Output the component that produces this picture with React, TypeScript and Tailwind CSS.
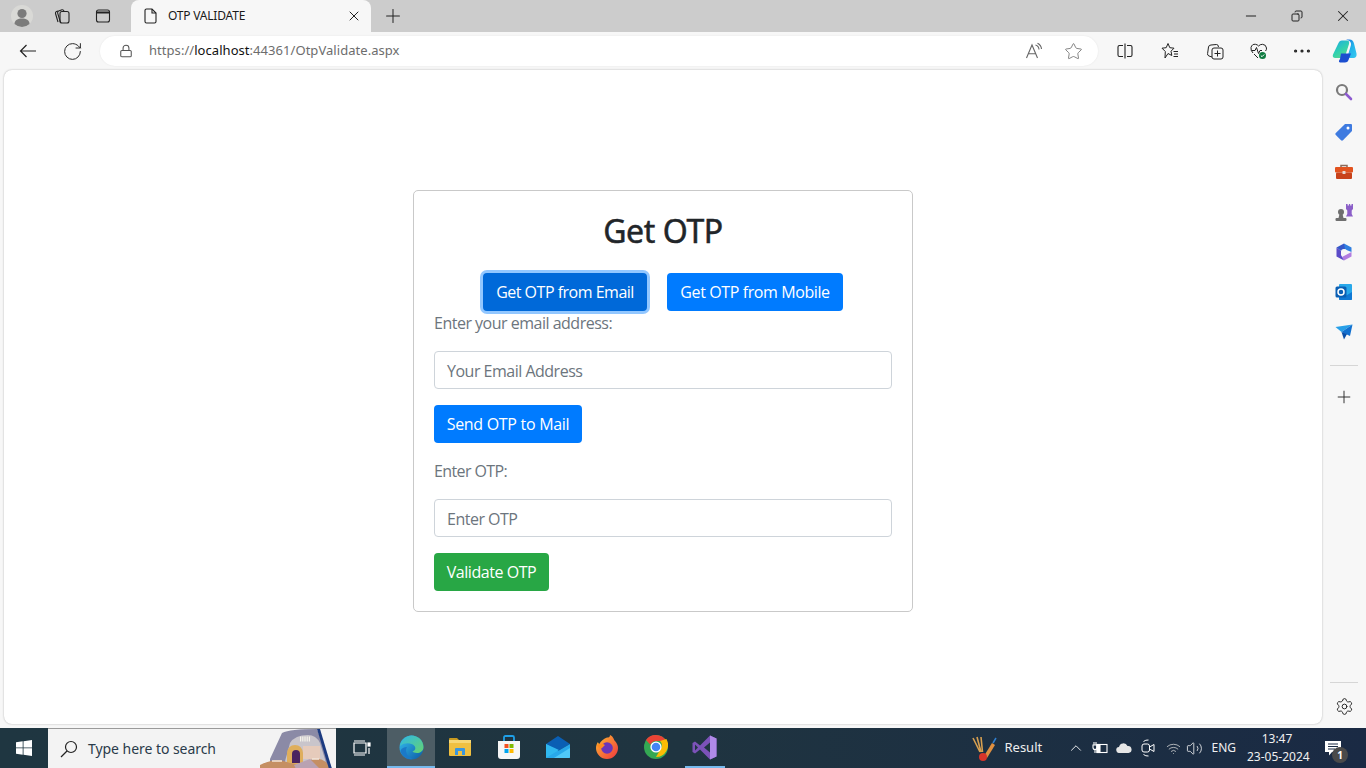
import { Copy, Lock, X, Plus, RotateCw, Minus, Star, Ellipsis, Settings, Wifi, Volume2, ChevronUp } from "lucide-react";

const font = { fontFamily: '"Open Sans", "Noto Sans", sans-serif' };

function Tabs() {
  return (
    <svg width="18" height="18" viewBox="0 0 18 18" fill="none" stroke="#222" strokeWidth="1.1">
      <rect x="7" y="4.500" width="9" height="11.500" rx="2" />
      <path d="M5 15 L2.500 6.500 Q2.200 5 3.500 4.500 L5 4" />
      <path d="M7.500 15.500 L4.600 6 Q4.400 4.600 5.600 4 L9 2.800 Q10.400 2.500 11 4" />
    </svg>
  );
}

function VerticalTabs() {
  return (
    <svg width="16" height="16" viewBox="0 0 16 16" fill="none" stroke="#222" strokeWidth="1.100">
      <rect x="1.500" y="2" width="13" height="12" rx="2" />
      <path d="M1.500 4.500h13" strokeWidth="2" />
    </svg>
  );
}

function PageIcon() {
  return (
    <svg width="14" height="16" viewBox="0 0 14 16" fill="none" stroke="#222" strokeWidth="1.100">
      <path d="M2.500 1h5.500l4 4v8.500a1.500 1.500 0 0 1-1.500 1.500h-8a1.500 1.500 0 0 1-1.500-1.500V2.500A1.500 1.500 0 0 1 2.500 1Z" />
      <path d="M8 1v4h4" />
    </svg>
  );
}

function Avatar() {
  return (
    <svg width="24" height="24" viewBox="0 0 24 24">
      <circle cx="12" cy="12" r="11" fill="#d9d9d6" />
      <circle cx="12" cy="9.500" r="4.600" fill="#7b7b7b" />
      <path d="M4.500 20c0-4 3.500-5.500 7.500-5.500s7.500 1.500 7.500 5.500a11 11 0 0 1-15 0Z" fill="#7b7b7b" />
    </svg>
  );
}

function BackArrow() {
  return (
    <svg width="18" height="14" viewBox="0 0 18 14" fill="none" stroke="#222" strokeWidth="1.200">
      <path d="M17 7H1.500M7.500 1 1.500 7l6 6" />
    </svg>
  );
}

function SplitScreen() {
  return (
    <svg width="16" height="16" viewBox="0 0 16 16" fill="none" stroke="#222" strokeWidth="1.100">
      <path d="M6 2.500H2.500a1.500 1.500 0 0 0-1.500 1.500v8a1.500 1.500 0 0 0 1.500 1.500H6" />
      <path d="M10 2.500h3.500a1.500 1.500 0 0 1 1.500 1.500v8a1.500 1.500 0 0 1-1.500 1.500H10" />
      <path d="M8 0.500v15" />
    </svg>
  );
}

function ReadAloud() {
  return (
    <svg width="18" height="18" viewBox="0 0 18 18" fill="none" stroke="#666" strokeWidth="1.100">
      <path d="M1.500 16 L7 3 L12.500 16 M3.500 11.800 H10.500" />
      <path d="M10.500 3a5 5 0 0 1 3.500 4.500M12.500 1.200a7 7 0 0 1 4 5.800" />
    </svg>
  );
}

function Favorites() {
  return (
    <svg width="18" height="18" viewBox="0 0 18 18" fill="none" stroke="#222" strokeWidth="1">
      <path d="M7 1.500 8.800 5.700 13 6.200 10 9.200 10.800 13.500 7 11.500 4 16 4.300 9.500 1 6.200 5.200 5.700Z" />
      <path d="M12.500 9.500h4.500M13 12h4M12.500 14.500h4.500" />
    </svg>
  );
}

function Collections() {
  return (
    <svg width="18" height="18" viewBox="0 0 18 18" fill="none" stroke="#222" strokeWidth="1">
      <path d="M6 15 3 14Q1.200 13.400 1.600 11.500L2.500 5Q2.800 3 5 3L10.500 2.500Q12.400 2.500 12.500 5" />
      <rect x="6" y="6" width="11" height="11" rx="2" />
      <path d="M11.500 8.500v6M8.500 11.500h6" />
    </svg>
  );
}

function Health() {
  return (
    <svg width="20" height="20" viewBox="0 0 20 20" fill="none">
      <path d="M4 12 Q1.500 9.500 2 6.500 Q3 2.800 6.500 3.300 Q8.500 3.600 9.500 5 Q11 3.300 13.500 3.300 Q17 3.500 17.500 7 Q17.600 9 16.500 10" stroke="#222" strokeWidth="1" />
      <path d="M2.500 9.500H6L7.500 6.500L9.500 12.500L11 9.500H13" stroke="#222" strokeWidth="1" />
      <path d="M5 13l4 4" stroke="#222" strokeWidth="1" />
      <circle cx="13.500" cy="14.500" r="3.500" fill="#107c41" />
      <path d="M11.800 14.500l1.200 1.200 2.200-2.200" stroke="#fff" strokeWidth="1" />
    </svg>
  );
}

function Copilot() {
  return (
    <svg width="26" height="26" viewBox="0 0 26 26">
      <defs>
        <linearGradient id="cpa" x1="0" y1="0" x2="1" y2="1">
          <stop offset="0" stopColor="#1a6fe0" />
          <stop offset="0.500" stopColor="#22b4ea" />
          <stop offset="1" stopColor="#38c8f0" />
        </linearGradient>
        <linearGradient id="cpb" x1="0" y1="0" x2="0.600" y2="1">
          <stop offset="0" stopColor="#1ba8e8" />
          <stop offset="0.600" stopColor="#30d0b0" />
          <stop offset="1" stopColor="#58d890" />
        </linearGradient>
      </defs>
      <path d="M10 2.500h5c2 0 2.500 1.500 2 3.500L13.500 17c-.6 2-2 3-4 3H3.500C1 20 .3 18.500 1 16.500L6 6c1-2.500 2.200-3.500 4-3.500Z" fill="url(#cpb)" />
      <path d="M14 1.500h3.500c2.500 0 3.800 1.500 4.500 4l2.500 10c.6 2.500-.8 4.500-3 4.500H18c-1.800 0-2.500-1-2-3L19 7c.5-2.500-1-4.500-5-5.500Z" fill="url(#cpa)" />
      <path d="M9 15.500h10l-2.500 6.500c-.7 1.800-2 2.500-3.500 2.500H9c-2.500 0-2.500-1.500-1-3.500Z" fill="#1c4fd0" />
    </svg>
  );
}

function SideSearch() {
  return (
    <svg width="18" height="18" viewBox="0 0 18 18" fill="none">
      <circle cx="7" cy="7" r="5" stroke="#7a7a7a" strokeWidth="2.200" />
      <path d="M11 11l5 5" stroke="#8e5bd0" strokeWidth="2.600" strokeLinecap="round" />
    </svg>
  );
}

function SideTag() {
  return (
    <svg width="18" height="18" viewBox="0 0 18 18">
      <path d="M10 1h6a1 1 0 0 1 1 1v6L8 17.200a1.500 1.500 0 0 1-2 0L.8 12a1.500 1.500 0 0 1 0-2Z" fill="#3f7be0" />
      <circle cx="13" cy="5" r="1.500" fill="#fff" />
    </svg>
  );
}

function SideTools() {
  return (
    <svg width="18" height="16" viewBox="0 0 18 16">
      <path d="M6 3V1.500h6V3" fill="none" stroke="#8a6a5a" strokeWidth="1.500" />
      <rect x="0" y="3" width="18" height="5.500" rx="1" fill="#e2531f" />
      <rect x="1" y="8.500" width="16" height="6.500" rx="1" fill="#c8421a" />
      <rect x="7.500" y="7" width="3" height="3" rx=".5" fill="#e8d8d0" />
    </svg>
  );
}

function SideGames() {
  return (
    <svg width="19" height="19" viewBox="0 0 19 19">
      <circle cx="6" cy="9" r="3" fill="#6f6f6f" />
      <path d="M4.500 11h3l1 4H3.500Z" fill="#6f6f6f" />
      <rect x="0.500" y="15" width="11" height="3" rx="1" fill="#6f6f6f" />
      <path d="M11 1h1.600v1.500h1.300V1h1.300v1.500h1.300V1H18v5l-1.300 1.500V11l1.300 2.500H11l1.300-2.500V7.500L11 6Z" fill="#8b5fc8" />
    </svg>
  );
}

function SideM365() {
  return (
    <svg width="18" height="18" viewBox="0 0 18 18">
      <path d="M9 0.500 16.500 4.500V9L9 6Z" fill="#2f7fe0" />
      <path d="M16.500 9v4.500L9 17.500 7 14Z" fill="#b27de0" />
      <path d="M9 17.500 1.500 13.500v-9L6 8v4Z" fill="#5b4bc8" />
      <path d="M1.500 4.500 9 .5 10 6 6 8Z" fill="#3557c8" />
      <circle cx="9" cy="9" r="3" fill="#f7f7f7" />
    </svg>
  );
}

function SideOutlook() {
  return (
    <svg width="18" height="18" viewBox="0 0 18 18">
      <rect x="4" y="1" width="13" height="16" rx="1" fill="#28a8ea" />
      <path d="M4 9l6.500 4L17 9v7a1 1 0 0 1-1 1H5a1 1 0 0 1-1-1Z" fill="#0f78d4" />
      <rect x="0.500" y="3.500" width="11" height="11" rx="1.500" fill="#0a5fb4" />
      <circle cx="6" cy="9" r="3" fill="none" stroke="#fff" strokeWidth="1.500" />
    </svg>
  );
}

function SideSend() {
  return (
    <svg width="18" height="16" viewBox="0 0 18 16">
      <path d="M0.500 3 17.500 0.500 6.500 8Z" fill="#28a0e8" />
      <path d="M6.500 8 17.500 .5 15 12Z" fill="#1070d0" />
      <path d="M6.500 8 9 15.500 12 10Z" fill="#0a4fa8" />
    </svg>
  );
}

function WinLogo() {
  return (
    <svg width="16" height="16" viewBox="0 0 16 16" fill="#fff">
      <path d="M0 2.300 6.700 1.300V7.500H0Z" />
      <path d="M7.500 1.200 16 0V7.500H7.500Z" />
      <path d="M0 8.300H6.700V14.700L0 13.700Z" />
      <path d="M7.500 8.300H16V16L7.500 14.800Z" />
    </svg>
  );
}

function SearchGlass() {
  return (
    <svg width="18" height="18" viewBox="0 0 18 18" fill="none" stroke="#222" strokeWidth="1.200">
      <circle cx="11" cy="7" r="5.500" />
      <path d="M7 11 1 17" />
    </svg>
  );
}

function SearchScene() {
  return (
    <svg width="76" height="40" viewBox="0 0 76 40" className="shrink-0">
      <path d="M10 30 22 4 Q30 0 57 0 L72 40 H10Z" fill="#8b8aa6" />
      <path d="M24 36 30 14 Q35 6 48 6 Q56 6 60 14 L68 40H24Z" fill="#c9c5cb" />
      <path d="M27 36V24Q28 16 35 16 Q42 16 43 24V36Z" fill="#dfae5c" />
      <path d="M32 34V25Q32 21 36 21 Q40 21 40 25V34Z" fill="#4a2460" />
      <rect x="43" y="17" width="17" height="13" fill="#e6cbbb" />
      <path d="M40 10h11" stroke="#f6f3ea" strokeWidth="5" strokeDasharray="1.200 1" />
      <path d="M0 36 Q10 31 20 31 L30 34 L40 36 L48 32 Q58 27 66 33 L71 40H0Z" fill="#c58f63" />
      <path d="M34 36 L50 30 L60 40 H36Z" fill="#b9a2b2" />
      <path d="M12 32h10M52 30h7" stroke="#f2e6dc" strokeWidth="1.400" />
      <path d="M57 0 H60 L72 40 H69Z" fill="#1b3a80" />
    </svg>
  );
}

function Edge() {
  return (
    <svg width="25" height="25" viewBox="0 0 25 25">
      <defs>
        <linearGradient id="ed1" x1="0" y1="0" x2="1" y2="1">
          <stop offset="0" stopColor="#35c1f1" />
          <stop offset="1" stopColor="#0c59a4" />
        </linearGradient>
        <linearGradient id="ed2" x1="0" y1="0" x2="1" y2="1">
          <stop offset="0" stopColor="#2fb8e8" />
          <stop offset="1" stopColor="#66d36e" />
        </linearGradient>
      </defs>
      <circle cx="12.500" cy="12.500" r="12" fill="url(#ed1)" />
      <path d="M1 11C2.500 4 8 .5 12.500 .5 19 .5 24.500 5.500 24.500 12c0 4-3.500 6-6.500 6-2.500 0-4-1-4.500-1.500 3-1 3.500-3.500 2-5.500C13 8 6 7 1 11Z" fill="url(#ed2)" />
      <path d="M8 12c-2.500 4 0 10 6 12-6 1-11-3-12.500-8C2.500 13 5 12 8 12Z" fill="#1b79c8" />
    </svg>
  );
}

function Explorer() {
  return (
    <svg width="22" height="20" viewBox="0 0 22 20">
      <path d="M0 2a1 1 0 0 1 1-1h7l2 2H0Z" fill="#c89a20" />
      <rect x="0" y="3" width="22" height="16" rx="1" fill="#f0c040" />
      <rect x="0" y="3" width="22" height="3" fill="#f7d774" />
      <path d="M6 18V12a1 1 0 0 1 1-1h8a1 1 0 0 1 1 1v6h-3v-4H9v4Z" fill="#3a96dd" />
    </svg>
  );
}

function Store() {
  return (
    <svg width="24" height="24" viewBox="0 0 24 24">
      <path d="M7 6V2.500Q7 1 8.500 1h7Q17 1 17 2.500V6" fill="none" stroke="#1fa0e8" strokeWidth="1.800" />
      <path d="M1 6h22v15a3 3 0 0 1-3 3H4a3 3 0 0 1-3-3Z" fill="#f6f6f6" />
      <rect x="7.500" y="9" width="4" height="4" fill="#f25022" />
      <rect x="12.500" y="9" width="4" height="4" fill="#7fba00" />
      <rect x="7.500" y="14" width="4" height="4" fill="#00a4ef" />
      <rect x="12.500" y="14" width="4" height="4" fill="#ffb900" />
    </svg>
  );
}

function Mail() {
  return (
    <svg width="24" height="22" viewBox="0 0 24 22">
      <path d="M0 8 12 0 24 8 12 15Z" fill="#0a5fb4" />
      <path d="M0 8 12 15 24 8V21a1 1 0 0 1-1 1H1a1 1 0 0 1-1-1Z" fill="#28a8ea" />
      <path d="M0 8v14L13 14Z" fill="#30b8f0" />
      <path d="M24 12 8 22h15a1 1 0 0 0 1-1Z" fill="#50c8f8" />
    </svg>
  );
}

function Firefox() {
  return (
    <svg width="24" height="24" viewBox="0 0 24 24">
      <defs>
        <linearGradient id="ff1" x1="0" y1="0" x2="1" y2="1">
          <stop offset="0" stopColor="#ffbd2e" />
          <stop offset="1" stopColor="#f0353f" />
        </linearGradient>
      </defs>
      <path d="M12 2.500C14 2.500 15 2 15 0c4 2 3.500 4.500 5 6 2 2.500 3 4.500 3 7a11 11 0 0 1-22 0c0-2.500.8-4.500 2-6 .2 1 .7 1.500 1.300 2C6 6 9 3.500 12 2.500Z" fill="url(#ff1)" />
      <circle cx="12" cy="13" r="5.800" fill="#6a35b8" />
      <path d="M2 10c3-2 6-1 8 0l-3 3c-2 1-4 0-5-3Z" fill="#ff8a1f" />
    </svg>
  );
}

function Chrome() {
  return (
    <svg width="24" height="24" viewBox="0 0 24 24">
      <circle cx="12" cy="12" r="12" fill="#34a853" />
      <path d="M12 0a12 12 0 0 1 10.400 6H12a6 6 0 0 0-5.600 3.800L2 5A12 12 0 0 1 12 0Z" fill="#ea4335" />
      <path d="M22.400 6A12 12 0 0 1 12 24l5.200-9A6 6 0 0 0 16 8Z" fill="#fbbc05" transform="translate(0 -2)" />
      <circle cx="12" cy="12" r="5.600" fill="#fff" />
      <circle cx="12" cy="12" r="4.300" fill="#4285f4" />
    </svg>
  );
}

function VisualStudio() {
  return (
    <svg width="25" height="25" viewBox="0 0 25 25">
      <path d="M18 .500 24.500 3.500V21.500L18 24.500 8 14.500 3 18.500.500 17V8L3 6.500 8 10.500Z" fill="#7c52b8" />
      <path d="M18 .500 24.500 3.500V21.500L18 24.500Z" fill="#b08ae8" />
      <path d="M18 7.500 12 12.500 18 17.500Z" fill="#1f3541" />
      <path d="M3 9.500V15.500L6 12.500Z" fill="#1f3541" />
    </svg>
  );
}

function Cricket() {
  return (
    <svg width="26" height="28" viewBox="0 0 26 28" fill="none">
      <path d="M2 4 9 18M6 3 10 18M10 3 11.500 18" stroke="#d8a050" strokeWidth="1.600" />
      <path d="M13 22 21 9 24 11 16 24Z" fill="#e09040" />
      <path d="M22 9l3-5" stroke="#2f7fd0" strokeWidth="1.500" />
      <circle cx="12" cy="23" r="4" fill="#d8352a" />
    </svg>
  );
}

function Battery() {
  return (
    <svg width="16" height="14" viewBox="0 0 16 14" fill="none" stroke="#fff" strokeWidth="1.100">
      <rect x="5" y="3.500" width="10" height="8" />
      <path d="M1 4h4v2.500a2 2 0 0 1-4 0ZM2 4V1M4 4V1M3 8.500V12" />
      <rect x="5" y="3.500" width="3" height="8" fill="#fff" />
    </svg>
  );
}

function Cloud() {
  return (
    <svg width="16" height="10" viewBox="0 0 16 10" fill="#e6e6e6">
      <path d="M3.500 10a3 3 0 0 1-.5-6A4.500 4.500 0 0 1 11.500 3 3.500 3.500 0 0 1 12.500 10Z" />
    </svg>
  );
}

function Camera() {
  return (
    <svg width="14" height="18" viewBox="0 0 14 18" fill="none" stroke="#fff" strokeWidth="1">
      <path d="M2.500 2.500a7 7 0 0 1 5-1.500M2.500 15.500a7 7 0 0 0 5 1.500" />
      <rect x="1" y="5" width="7.500" height="8" rx="2" />
      <path d="M8.500 8 13 5.500v7L8.500 10" />
    </svg>
  );
}

function Notifications() {
  return (
    <svg width="16" height="15" viewBox="0 0 16 15">
      <path d="M0 0h16v11H7l-3 3.500V11H0Z" fill="#fff" />
      <path d="M3 3h10M3 5.500h10M3 8h7" stroke="#1a2b45" strokeWidth="1" />
    </svg>
  );
}

function TaskItem({ children, active = false, run = false }: { children: React.ReactNode; active?: boolean; run?: boolean }) {
  return (
    <div className={`h-full flex flex-col items-center ${active ? "w-[48px] bg-[#4d5d65]" : "w-[49px]"}`}>
      <div className="flex-1 flex items-center justify-center">{children}</div>
      <div className={`h-[2px] ${active ? "w-full bg-[#76b9ed]" : run ? "w-10 bg-[#76b9ed]" : "w-full"}`} />
    </div>
  );
}

function SideItem({ children }: { children: React.ReactNode }) {
  return <div className="h-10 flex items-center justify-center">{children}</div>;
}

function ToolbarBtn({ children, className = "w-11" }: { children: React.ReactNode; className?: string }) {
  return <div className={`flex items-center justify-center ${className}`}>{children}</div>;
}

export default function App() {
  return (
    <div className="h-screen w-full overflow-hidden flex flex-col bg-[#f7f7f7]" style={font}>
      {/* tab strip */}
      <div className="h-8 bg-[#cccccc] flex items-center shrink-0">
        <div className="w-[44px] flex justify-center"><Avatar /></div>
        <div className="w-[36px] flex justify-center"><Tabs /></div>
        <div className="w-[46px] flex justify-center"><VerticalTabs /></div>
        <div className="ml-[5px] w-[240px] h-8 bg-[#f7f7f7] rounded-t-lg flex items-center pl-[13px] pr-[9px]">
          <PageIcon />
          <span className="ml-[10px] text-[12px] text-[#1a1a1a] flex-1 tracking-[-0.2px]" style={{ fontFamily: '"Noto Sans", sans-serif' }}>OTP VALIDATE</span>
          <X size={16} strokeWidth={1.5} color="#222" />
        </div>
        <div className="w-[44px] flex justify-center"><Plus size={22} strokeWidth={1.1} color="#222" /></div>
        <div className="flex-1" />
        <div className="w-[46px] flex justify-center"><Minus size={16} strokeWidth={1.5} color="#222" /></div>
        <div className="w-[46px] flex justify-center"><Copy size={12} strokeWidth={2} color="#222" className="-scale-x-100" /></div>
        <div className="w-[46px] flex justify-center"><X size={18} strokeWidth={1.4} color="#222" /></div>
      </div>

      {/* toolbar */}
      <div className="h-[38px] flex items-center shrink-0">
        <ToolbarBtn className="w-11 ml-[6px]"><BackArrow /></ToolbarBtn>
        <ToolbarBtn><RotateCw size={21} strokeWidth={1.1} color="#222" /></ToolbarBtn>
        <div className="w-[998px] h-[30px] ml-[6px] bg-white rounded-full flex items-center pl-[19px] pr-[15px] shadow-[0_0_2px_rgba(0,0,0,0.08)]">
          <Lock size={14} strokeWidth={1.8} color="#555" />
          <span className="ml-[16px] text-[13px] text-[#6d6d6d] flex-1 tracking-[0.05px]" style={{ fontFamily: '"Noto Sans", sans-serif' }}>
            https://<span className="text-[#111]">localhost</span>:44361/OtpValidate.aspx
          </span>
          <ReadAloud />
          <div className="ml-[21px]"><Star size={19} strokeWidth={1} color="#666" /></div>
        </div>
        <ToolbarBtn className="w-11 ml-[5px]"><SplitScreen /></ToolbarBtn>
        <ToolbarBtn className="w-[45px]"><Favorites /></ToolbarBtn>
        <ToolbarBtn className="w-[45px]"><Collections /></ToolbarBtn>
        <ToolbarBtn className="w-[44px]"><Health /></ToolbarBtn>
        <ToolbarBtn className="w-[42px]"><Ellipsis size={22} strokeWidth={1.5} color="#222" /></ToolbarBtn>
        <ToolbarBtn className="w-[43px]"><Copilot /></ToolbarBtn>
      </div>

      {/* body */}
      <div className="flex-1 flex min-h-0 pl-1">
        <main className="w-[1318px] bg-white rounded-lg shadow-[0_0_2px_rgba(0,0,0,0.3)] flex justify-center pt-[120px] mb-[4px]">
          <div className="w-[500px] h-[422px] border border-[#c9c9c9] rounded-[5px] p-5 text-[16px] text-[#6c757d]">
            <h1 className="h-10 text-[32px] leading-10 text-[#212529] text-center mb-[22px] tracking-[-0.4px] [-webkit-text-stroke:0.5px_#212529]" style={{ fontFamily: '"Noto Sans", sans-serif' }}>Get OTP</h1>
            <div className="flex justify-center gap-5 h-[38px]">
              <button className="w-[164px] h-[38px] rounded bg-[#0069d9] text-white shadow-[0_0_0_3px_rgba(38,143,255,0.5)] tracking-[-0.5px]">Get OTP from Email</button>
              <button className="w-[176px] h-[38px] rounded bg-[#007bff] text-white tracking-[-0.4px]">Get OTP from Mobile</button>
            </div>
            <label className="block h-6 leading-6 tracking-[-0.5px]">Enter your email address:</label>
            <div className="mt-[16px] h-[38px] border border-[#ced4da] rounded flex items-center px-3 pt-[1px] tracking-[-0.5px]">Your Email Address</div>
            <button className="block mt-4 w-[148px] h-[38px] rounded bg-[#007bff] text-white tracking-[-0.3px]">Send OTP to Mail</button>
            <label className="block h-6 mt-4 leading-6 tracking-[-0.6px]">Enter OTP:</label>
            <div className="mt-4 h-[38px] border border-[#ced4da] rounded flex items-center px-3 pt-[1px] tracking-[-0.5px]">Enter OTP</div>
            <button className="block mt-4 w-[115px] h-[38px] rounded bg-[#28a745] text-white tracking-[-0.45px]">Validate OTP</button>
          </div>
        </main>
        <aside className="flex-1 flex flex-col pt-[2px] pb-1">
          <SideItem><SideSearch /></SideItem>
          <SideItem><SideTag /></SideItem>
          <SideItem><SideTools /></SideItem>
          <SideItem><SideGames /></SideItem>
          <SideItem><SideM365 /></SideItem>
          <SideItem><SideOutlook /></SideItem>
          <SideItem><SideSend /></SideItem>
          <div className="mx-[8px] mt-[13px] border-t border-[#d6d6d6]" />
          <div className="h-[32px] mt-[15px] flex items-center justify-center"><Plus size={20} strokeWidth={1.1} color="#222" /></div>
          <div className="flex-1" />
          <div className="mx-[8px] border-t border-[#d6d6d6]" />
          <div className="h-[41px] pt-[5px] flex items-center justify-center"><Settings size={19} strokeWidth={1.2} color="#222" /></div>
        </aside>
      </div>

      {/* taskbar */}
      <div className="h-10 shrink-0 flex items-center bg-linear-to-r from-[#1f3641] via-[#1f3440] to-[#1a2a44] text-white">
        <div className="w-12 flex justify-center"><WinLogo /></div>
        <div className="w-[288px] h-10 bg-[#f3f3f3] border-t border-[#9a9a9a] flex items-center pl-[12px] overflow-hidden">
          <SearchGlass />
          <span className="ml-[10px] flex-1 text-[14px] text-[#2a3b4a] tracking-[-0.05px]" style={{ fontFamily: '"Noto Sans", sans-serif' }}>Type here to search</span>
          <SearchScene />
        </div>
        <div className="w-[51px] flex justify-center">
          <svg width="18" height="16" viewBox="0 0 18 16" fill="none" stroke="#fff" strokeWidth="1.200">
            <path d="M1 1h11M1 15h11M13 3v10H1V3Z" />
            <rect x="15" y="3" width="2" height="3" fill="#fff" />
            <path d="M16 8v6" />
          </svg>
        </div>
        <TaskItem active><Edge /></TaskItem>
        <TaskItem><Explorer /></TaskItem>
        <TaskItem><Store /></TaskItem>
        <TaskItem><Mail /></TaskItem>
        <TaskItem><Firefox /></TaskItem>
        <TaskItem><Chrome /></TaskItem>
        <TaskItem run><VisualStudio /></TaskItem>
        <div className="flex-1" />
        <Cricket />
        <span className="ml-[7px] w-[63px] text-[13px] text-[#eeeeee]" style={{ fontFamily: '"Noto Sans", sans-serif' }}>Result</span>
        <ChevronUp size={18} strokeWidth={1.2} color="#fff" />
        <div className="ml-[7px]"><Battery /></div>
        <div className="ml-[8px]"><Cloud /></div>
        <div className="ml-[9px]"><Camera /></div>
        <div className="ml-[11px]"><Wifi size={15} strokeWidth={1.2} color="#ddd" /></div>
        <div className="ml-[5px]"><Volume2 size={17} strokeWidth={1.1} color="#fff" /></div>
        <span className="ml-[8px] text-[12px] text-[#f0f0f0]" style={{ fontFamily: '"Noto Sans", sans-serif' }}>ENG</span>
        <div className="ml-[11px] w-[60px] text-center text-[12px] leading-[18px] text-[#f0f0f0]" style={{ fontFamily: '"Noto Sans", sans-serif' }}>
          <div>13:47</div>
          <div className="whitespace-nowrap">23-05-2024</div>
        </div>
        <div className="relative ml-[18px] mr-[25px]">
          <Notifications />
          <span className="absolute -right-[7px] -bottom-[7px] w-4 h-4 rounded-full bg-[#4a4a4a] text-[10px] font-bold leading-4 text-center">1</span>
        </div>
      </div>
    </div>
  );
}
